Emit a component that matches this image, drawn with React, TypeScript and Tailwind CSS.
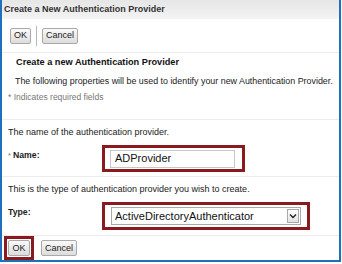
import React from "react";

const font = { fontFamily: '"Liberation Sans", Arial, sans-serif' };

function Btn({ label }: { label: string }) {
  return (
    <div className="h-[16px] px-[3px] flex items-center border border-[#a9a9a9] rounded-[2px] bg-gradient-to-b from-[#fafafa] to-[#dcdcdc] text-[9px] text-[#222] leading-none">
      {label}
    </div>
  );
}

export default function App() {
  return (
    <div className="w-[342px] h-[264px] bg-white" style={font}>
      <div className="w-[341px] h-[262px] border-l-2 border-r-2 border-b-2 border-[#1f6fbf] flex flex-col">
        <div className="h-[19px] bg-gradient-to-b from-[#e6e6e6] to-[#f3f3f3] flex items-center pl-[2px] text-[9px] font-bold text-[#333]">
          Create a New Authentication Provider
        </div>
        <div className="h-[33px] flex items-center pl-[8px] gap-[5px]">
          <Btn label="OK" />
          <div className="w-px h-[20px] bg-[#b5b5b5]" />
          <Btn label="Cancel" />
        </div>
        <div className="border-t border-[#ececec]" />
        <div className="h-[20px] flex items-center pl-[14px] text-[9.2px] font-bold text-[#111]">
          Create a new Authentication Provider
        </div>
        <div className="h-[17px] flex items-center pl-[13px] text-[8.9px] text-[#222]">
          The following properties will be used to identify your new Authentication Provider.
        </div>
        <div className="h-[15px] flex items-center pl-[6px] text-[8.5px] text-[#777]">
          * Indicates required fields
        </div>
        <div className="h-[14px]" />
        <div className="border-t border-[#ececec]" />
        <div className="h-[25px] flex items-center pl-[6px] text-[9px] text-[#222]">
          The name of the authentication provider.
        </div>
        <div className="h-[31px] flex items-start">
          <div className="w-[100px] pl-[6px] pt-[4px] text-[8.7px] font-bold text-[#222]">
            <span className="font-normal text-[#777] text-[7.5px]">* </span>Name:
          </div>
          <div className="w-[143px] h-[27px] border-[3px] border-[#8b1a1f] flex items-center pl-[5px]">
            <div className="w-[125px] h-[18px] border border-[#c8c8c8] flex items-center pl-[4px] text-[11px] text-[#111]">
              ADProvider
            </div>
          </div>
        </div>
        <div className="border-t border-[#ececec]" />
        <div className="h-[25px] flex items-center pl-[6px] text-[9px] text-[#222]">
          This is the type of authentication provider you wish to create.
        </div>
        <div className="h-[33px] flex items-start">
          <div className="w-[100px] pl-[6px] pt-[4px] text-[8.7px] font-bold text-[#222]">
            Type:
          </div>
          <div className="w-[208px] h-[28px] border-[3px] border-[#8b1a1f] flex items-center pl-[6px]">
            <div className="w-[190px] h-[18px] border border-[#a8a8a8] flex items-center justify-between pl-[3px] text-[11px] text-[#111]">
              <span>ActiveDirectoryAuthenticator</span>
              <div className="w-[12px] h-[14px] mr-[1px] border border-[#a8a8a8] bg-gradient-to-b from-white to-[#e2e2e2] flex items-center justify-center">
                <svg width="8" height="6" viewBox="0 0 8 6">
                  <path d="M1 1.5 L4 4.5 L7 1.5" stroke="#222" strokeWidth="1.4" fill="none" />
                </svg>
              </div>
            </div>
          </div>
        </div>
        <div className="border-t border-[#ececec]" />
        <div className="flex-1 flex items-center pl-[2px] gap-[7px]">
          <div className="w-[30px] h-[24px] border-[3px] border-[#8b1a1f] flex items-center justify-center">
            <Btn label="OK" />
          </div>
          <Btn label="Cancel" />
        </div>
      </div>
    </div>
  );
}
